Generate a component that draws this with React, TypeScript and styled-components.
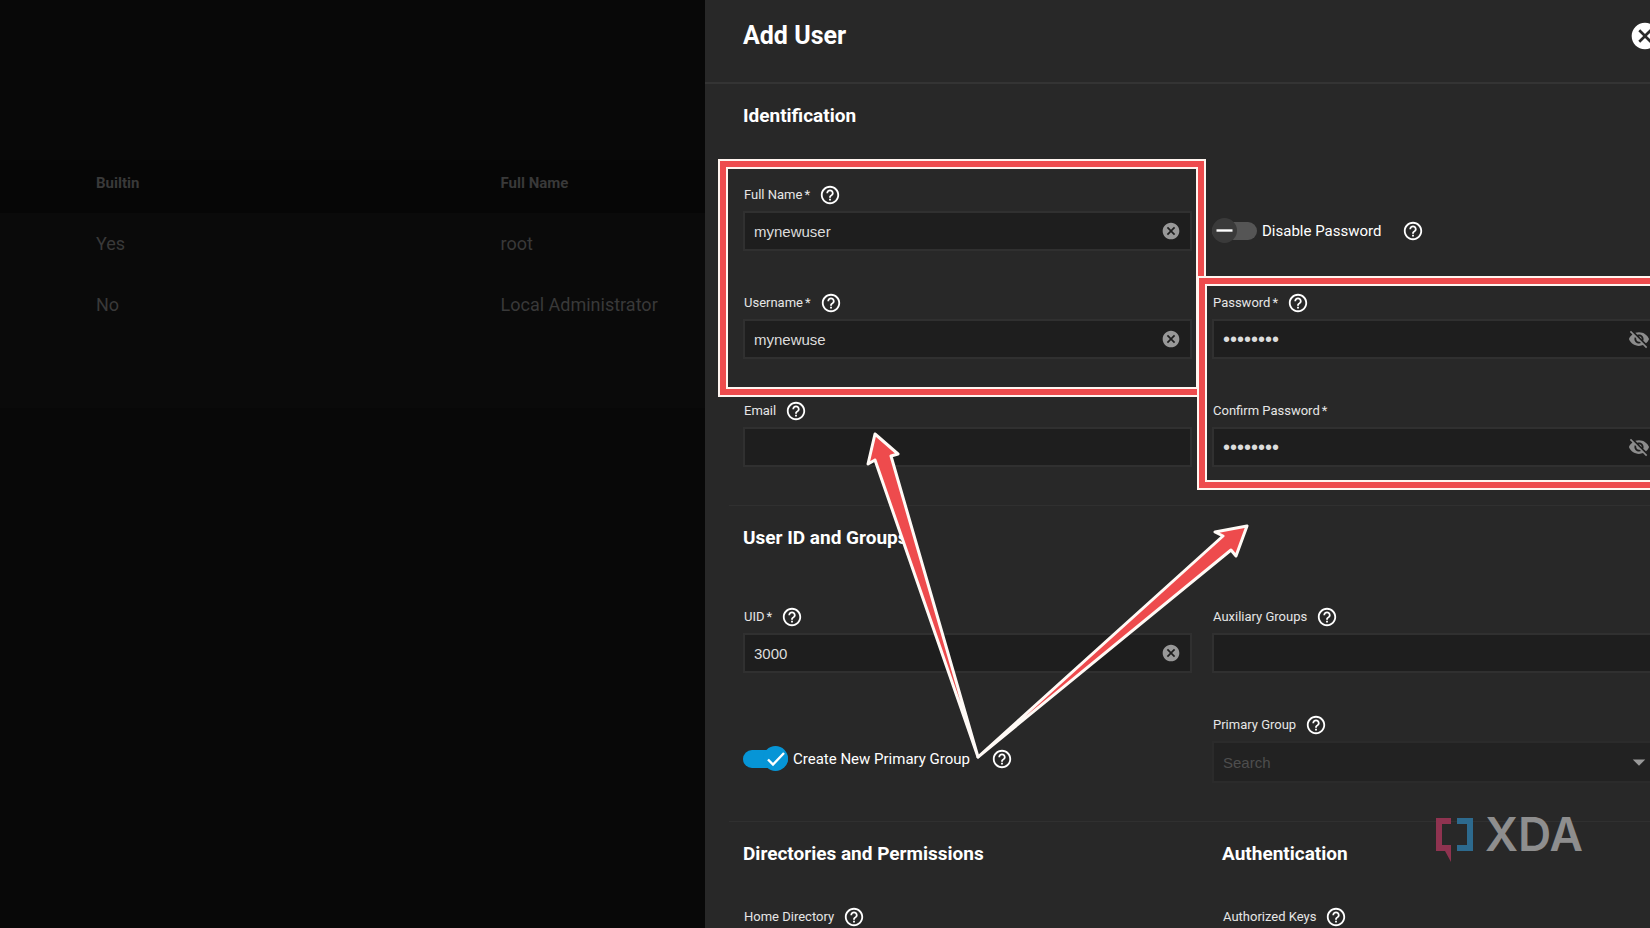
import React from 'react';
import styled, { createGlobalStyle } from 'styled-components';
import {
  MdArrowDropDown,
  MdCancel,
  MdHelpOutline,
  MdVisibilityOff,
} from 'react-icons/md';

const red = '#ee4b4d';

const GlobalStyle = createGlobalStyle`
  *, *::before, *::after { box-sizing: border-box; }
  body {
    margin: 0;
    background: #080808;
    color: #fff;
    font-family: Roboto, "Liberation Sans", sans-serif;
  }
`;

const Shell = styled.div`
  position: relative;
  display: grid;
  grid-template-columns: minmax(0, 47fr) minmax(0, 63fr);
  min-height: 100vh;
  overflow: hidden;
`;

/* Dimmed users list behind the drawer */

const Backdrop = styled.main`
  padding-top: 160px;
  background: #080808;
`;

const TableCard = styled.div`
  padding-bottom: 73px;
  background: #0a0a0a;
`;

const UsersTable = styled.table`
  width: 100%;
  table-layout: fixed;
  border-collapse: collapse;
  color: #393939;
  text-align: left;
`;

const HeadCell = styled.th<{ $first?: boolean }>`
  width: ${(p) => (p.$first ? '71%' : 'auto')};
  height: 53px;
  padding: 0 0 8px ${(p) => (p.$first ? '96px' : '0')};
  background: #060606;
  font-size: 15px;
  font-weight: 700;
`;

const Cell = styled.td<{ $first?: boolean }>`
  height: 61px;
  padding: 0 0 0 ${(p) => (p.$first ? '96px' : '0')};
  font-size: 18px;
`;

/* Drawer */

const Drawer = styled.aside`
  position: relative;
  width: calc(100% + 49px);
  background: #282828;
`;

const DrawerHeader = styled.header`
  display: flex;
  align-items: center;
  justify-content: space-between;
  height: 84px;
  padding: 0 38px 10px;
  border-bottom: 2px solid #343434;
`;

const DrawerTitle = styled.h1`
  margin: 0;
  font-size: 25px;
  line-height: 32px;
  font-weight: 700;
`;

const IconButton = styled.button<{ $size: number; $color?: string }>`
  display: inline-flex;
  flex: none;
  padding: 0;
  border: 0;
  background: none;
  color: ${(p) => p.$color ?? '#fff'};
  font-size: ${(p) => p.$size}px;
  cursor: pointer;
`;

const Section = styled.section<{ $last?: boolean }>`
  margin: 0 24px;
  padding: 20px 14px ${(p) => (p.$last ? '0' : '38px')};
  border-bottom: ${(p) => (p.$last ? '0' : '1px solid #303030')};
`;

const SectionTitle = styled.h2<{ $tight?: boolean }>`
  margin: 0 0 ${(p) => (p.$tight ? '40px' : '56px')};
  font-size: 19px;
  line-height: 24px;
  font-weight: 700;
`;

const Columns = styled.div`
  display: grid;
  grid-template-columns: repeat(2, minmax(0, 1fr));
  column-gap: 20px;
  row-gap: 41px;
`;

const InsetColumn = styled.div`
  padding-left: 10px;
`;

const Field = styled.div`
  display: flex;
  flex-direction: column;
  gap: 5px;
`;

const LabelRow = styled.div`
  display: flex;
  align-items: center;
  gap: 9px;
  height: 22px;
  padding-left: 1px;
`;

const Label = styled.label`
  color: #e6e6e6;
  font-size: 13px;
  line-height: 20px;
`;

const Asterisk = styled.span`
  margin-left: 2px;
`;

const Box = styled.div<{ $disabled?: boolean }>`
  display: flex;
  align-items: center;
  height: ${(p) => (p.$disabled ? '42px' : '40px')};
  padding: 0 9px;
  border: 2px solid ${(p) => (p.$disabled ? '#2b2b2b' : '#303030')};
  background: ${(p) => (p.$disabled ? '#222' : '#1e1e1e')};
`;

const TextInput = styled.input`
  flex: 1;
  min-width: 0;
  height: 100%;
  padding: 0;
  border: 0;
  outline: 0;
  background: none;
  color: #dcdcdc;
  font-family: "Liberation Sans", sans-serif;
  font-size: ${(p) => (p.type === 'password' ? '20px' : '15px')};
`;

const SelectInput = styled.select`
  flex: 1;
  min-width: 0;
  height: 100%;
  padding: 0;
  border: 0;
  appearance: none;
  background: none;
  color: #4e4e4e;
  opacity: 1;
  font-family: "Liberation Sans", sans-serif;
  font-size: 15px;
`;

const Caret = styled(MdArrowDropDown)`
  flex: none;
  width: 30px;
  height: 30px;
  margin-right: -4px;
  color: #9a9a9a;
`;

const ToggleRow = styled.div<{ $lift?: boolean }>`
  display: flex;
  align-self: end;
  align-items: center;
  gap: 21px;
  height: 40px;
  margin-bottom: ${(p) => (p.$lift ? '4px' : '0')};
`;

const ToggleLabel = styled.label`
  display: flex;
  align-items: center;
  gap: 5px;
  font-size: 15px;
  line-height: 20px;
`;

const Track = styled.span<{ $on: boolean }>`
  position: relative;
  flex: none;
  width: 45px;
  height: 18px;
  border-radius: 9px;
  background: ${(p) => (p.$on ? '#0695d6' : '#555')};
`;

const ToggleInput = styled.input`
  position: absolute;
  inset: 0;
  width: 100%;
  height: 100%;
  margin: 0;
  opacity: 0;
  cursor: pointer;
`;

const Knob = styled.span<{ $on: boolean }>`
  position: absolute;
  top: -4px;
  ${(p) => (p.$on ? 'right: 0;' : 'left: 0;')}
  display: flex;
  width: 25px;
  height: 25px;
  border-radius: 50%;
  background: ${(p) => (p.$on ? '#0695d6' : '#3a3a3a')};
  pointer-events: none;
`;

/* Callouts drawn over the form */

const Highlight = styled.div`
  position: absolute;
  border: 2px solid #fff5f0;
  box-shadow: inset 0 0 0 6px ${red}, inset 0 0 0 8px #fff5f0;
  pointer-events: none;
`;

const NamesHighlight = styled(Highlight)`
  top: 159px;
  left: 13px;
  width: calc(50% - 9px);
  height: 238px;
`;

const PasswordHighlight = styled(Highlight)`
  top: 276px;
  right: 0;
  left: calc(50% - 5px);
  height: 214px;
`;

const Arrows = styled.svg`
  position: absolute;
  top: 0;
  left: 0;
  width: 600px;
  height: 800px;
  pointer-events: none;
`;

const Watermark = styled.div`
  position: absolute;
  top: 817px;
  right: 67px;
  display: flex;
  align-items: flex-start;
  gap: 12px;
  color: #8e8e8e;
  font-family: Inter, sans-serif;
  font-size: 46px;
  line-height: 34px;
  font-weight: 600;
`;

function Help({ topic }: { topic: string }) {
  return (
    <IconButton type="button" $size={22} aria-label={`Help: ${topic}`}>
      <MdHelpOutline />
    </IconButton>
  );
}

interface FormFieldProps {
  id: string;
  label: string;
  required?: boolean;
  help?: boolean;
  value?: string;
  password?: boolean;
}

function FormField({ id, label, required, help = true, value = '', password }: FormFieldProps) {
  return (
    <Field>
      <LabelRow>
        <Label htmlFor={id}>
          {label}
          {required && <Asterisk>*</Asterisk>}
        </Label>
        {help && <Help topic={label} />}
      </LabelRow>
      <Box>
        <TextInput id={id} type={password ? 'password' : 'text'} defaultValue={value} />
        {password && (
          <IconButton type="button" $size={22} $color="#8c8c8c" aria-label="Show password">
            <MdVisibilityOff />
          </IconButton>
        )}
        {!password && value && (
          <IconButton type="button" $size={20} $color="#989898" aria-label={`Clear ${label}`}>
            <MdCancel />
          </IconButton>
        )}
      </Box>
    </Field>
  );
}

function Toggle({ id, label, initial, lift }: { id: string; label: string; initial: boolean; lift?: boolean }) {
  const [on, setOn] = React.useState(initial);
  return (
    <ToggleRow $lift={lift}>
      <ToggleLabel htmlFor={id}>
        <Track $on={on}>
          <ToggleInput id={id} type="checkbox" checked={on} onChange={() => setOn(!on)} />
          <Knob $on={on}>
            <svg width="25" height="25" viewBox="0 0 25 25" fill="none" stroke="#fff">
              {on ? (
                <path d="M5 13.5l5 5L21 7" strokeWidth="2.4" />
              ) : (
                <path d="M4.500 12.500h16" strokeWidth="2.400" />
              )}
            </svg>
          </Knob>
        </Track>
        {label}
      </ToggleLabel>
      <Help topic={label} />
    </ToggleRow>
  );
}

const users = [
  { builtin: 'Yes', fullName: 'root' },
  { builtin: 'No', fullName: 'Local Administrator' },
];

export default function App() {
  return (
    <>
      <GlobalStyle />
      <Shell>
        <Backdrop>
          <TableCard>
            <UsersTable>
              <thead>
                <tr>
                  <HeadCell $first>Builtin</HeadCell>
                  <HeadCell>Full Name</HeadCell>
                </tr>
              </thead>
              <tbody>
                {users.map((user) => (
                  <tr key={user.fullName}>
                    <Cell $first>{user.builtin}</Cell>
                    <Cell>{user.fullName}</Cell>
                  </tr>
                ))}
              </tbody>
            </UsersTable>
          </TableCard>
        </Backdrop>

        <Drawer>
          <DrawerHeader>
            <DrawerTitle>Add User</DrawerTitle>
            <IconButton type="button" $size={32} aria-label="Close">
              <MdCancel />
            </IconButton>
          </DrawerHeader>

          <Section>
            <SectionTitle>Identification</SectionTitle>
            <Columns>
              <FormField id="full-name" label="Full Name" required value="mynewuser" />
              <Toggle id="disable-password" label="Disable Password" initial={false} />
              <FormField id="username" label="Username" required value="mynewuse" />
              <FormField id="password" label="Password" required password value="password" />
              <FormField id="email" label="Email" />
              <FormField
                id="confirm-password"
                label="Confirm Password"
                required
                help={false}
                password
                value="password"
              />
            </Columns>
          </Section>

          <Section>
            <SectionTitle>User ID and Groups</SectionTitle>
            <Columns>
              <FormField id="uid" label="UID" required value="3000" />
              <FormField id="auxiliary-groups" label="Auxiliary Groups" />
              <Toggle id="create-group" label="Create New Primary Group" initial lift />
              <Field>
                <LabelRow>
                  <Label htmlFor="primary-group">Primary Group</Label>
                  <Help topic="Primary Group" />
                </LabelRow>
                <Box $disabled>
                  <SelectInput id="primary-group" disabled>
                    <option>Search</option>
                  </SelectInput>
                  <Caret />
                </Box>
              </Field>
            </Columns>
          </Section>

          <Section $last>
            <Columns>
              <div>
                <SectionTitle $tight>Directories and Permissions</SectionTitle>
                <LabelRow>
                  <Label as="span">Home Directory</Label>
                  <Help topic="Home Directory" />
                </LabelRow>
              </div>
              <InsetColumn>
                <SectionTitle $tight>Authentication</SectionTitle>
                <LabelRow>
                  <Label as="span">Authorized Keys</Label>
                  <Help topic="Authorized Keys" />
                </LabelRow>
              </InsetColumn>
            </Columns>
          </Section>

          <NamesHighlight />
          <PasswordHighlight />
          <Arrows
            viewBox="705 0 600 800"
            fill={red}
            stroke="#fffaf6"
            strokeWidth="3"
            strokeLinejoin="round"
            aria-hidden="true"
          >
            <path d="M875 434L898 454L891 456L978 757L875 460L868 464Z" />
            <path d="M1247 526L1215 532L1223 536L978 757L1231 550L1236 556Z" />
          </Arrows>
        </Drawer>

        <Watermark>
          <svg width="37" height="46" viewBox="0 0 37 46" aria-hidden="true">
            <path d="M0 1h15v6H6v21h9v17L9 34H0z" fill="#8f3350" />
            <path d="M21 1h16v33H21v-6h10V7H21z" fill="#2d6a8e" />
          </svg>
          <span>XDA</span>
        </Watermark>
      </Shell>
    </>
  );
}
